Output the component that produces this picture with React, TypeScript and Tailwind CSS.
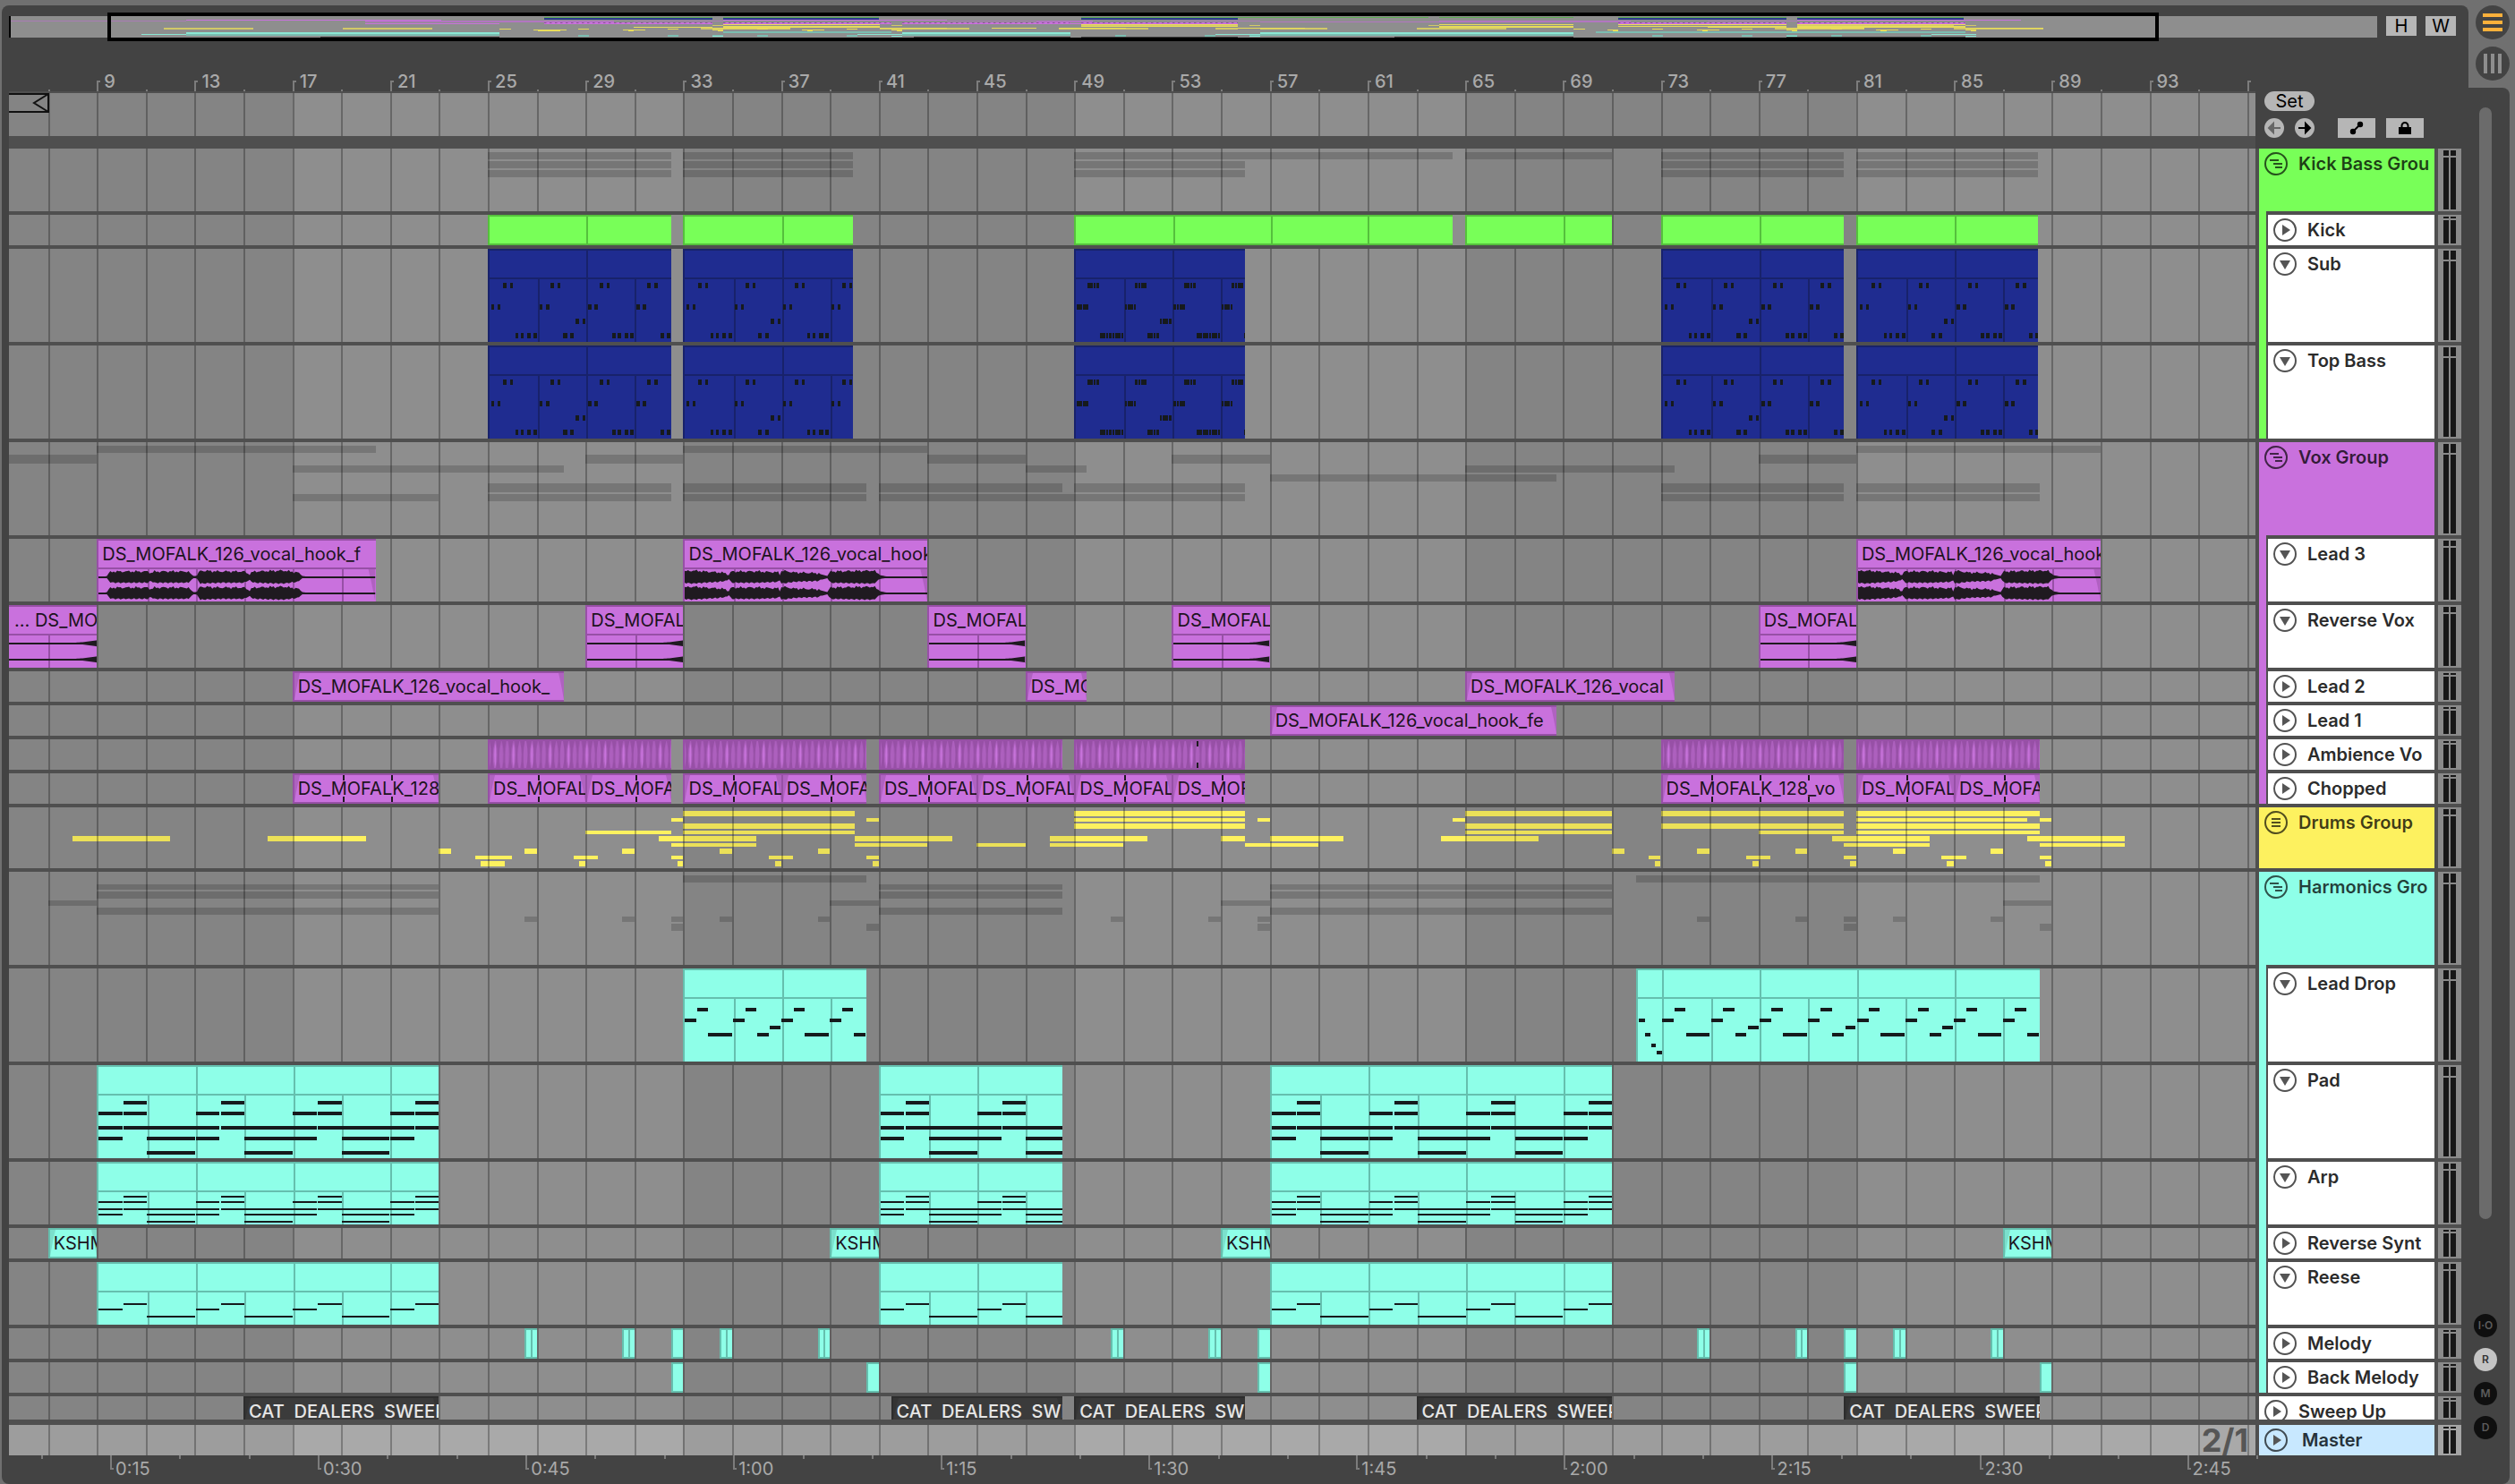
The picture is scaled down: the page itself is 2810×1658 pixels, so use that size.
import type { ReactNode } from "react";
import clsx from "clsx";

const VIEW_START = 5.4;
const VIEW_BARS = 91.94;
const SHADED = [[VIEW_START, 17], [33, 49], [65, 81]];

type Range = number[];
type Kind = "group" | "midi" | "audio" | "plain" | "ambience" | "chopped" | "melody" | "sweep";

interface Palette {
  fill: string;
  line: string;
  fade: string;
  hex: string;
}

interface Track {
  name: string;
  kind: Kind;
  height: string;
  palette: Palette;
  clips?: Range[];
  labels?: string[];
  pattern?: string;
  lanes?: Lane[];
  open?: boolean;
  flat?: boolean;
}

interface Lane {
  y: number;
  h: number;
  ranges: Range[];
}

const GREEN: Palette = { fill: "bg-[#78ff58]", line: "border-[#55c03d]", fade: "#55c03d", hex: "#78ff58" };
const NAVY: Palette = { fill: "bg-[#1f2c90]", line: "border-[#18226b]", fade: "#18226b", hex: "#1f2c90" };
const PINK: Palette = { fill: "bg-[#c971dd]", line: "border-[#9750a6]", fade: "#af62c0", hex: "#c971dd" };
const YELLOW: Palette = { fill: "bg-[#fdf15f]", line: "border-[#c0b648]", fade: "#c0b648", hex: "#fdf15f" };
const CYAN: Palette = { fill: "bg-[#8effe8]", line: "border-[#65bfae]", fade: "#7be0cc", hex: "#8effe8" };
const DARK: Palette = { fill: "bg-[#3b3b3b]", line: "border-[#2d2d2d]", fade: "#343434", hex: "#3b3b3b" };

const kick = [[25, 32.5], [33, 39.95], [49, 64.5], [65, 71], [73, 80.5], [81, 88.45]];
const bass = [[25, 32.5], [33, 39.95], [49, 56], [73, 80.5], [81, 88.45]];
const lead3 = [[9, 20.4], [33, 43], [81, 91]];
const reverseVox = [[VIEW_START, 9], [29, 33], [43, 47], [53, 57], [77, 81]];
const lead2 = [[17, 28.1], [47, 49.5], [65, 73.55]];
const lead1 = [[57, 68.75]];
const ambience = [[25, 32.5], [33, 40.5], [41, 48.5], [49, 56], [73, 80.5], [81, 88.5]];
const chopped = [
  [17, 23], [25, 29], [29, 32.5], [33, 37], [37, 40.5], [41, 45], [45, 49],
  [49, 53], [53, 56], [73, 80.5], [81, 85], [85, 88.5],
];
const leadDrop = [[33, 40.5], [72, 88.5]];
const pad = [[9, 23], [41, 48.5], [57, 71]];
const reverseSynth = [[7, 9], [39, 41], [55, 57], [87, 89]];
const melody = [
  [26.5, 27], [30.5, 31], [32.5, 33], [34.5, 35], [38.5, 39], [50.5, 51], [54.5, 55],
  [56.5, 57], [74.5, 75], [78.5, 79], [80.5, 81], [82.5, 83], [86.5, 87],
];
const backMelody = [[32.5, 33], [40.5, 41], [56.5, 57], [80.5, 81], [88.5, 89]];
const sweep = [[15, 23], [41.5, 48.5], [49, 56], [63, 71], [80.5, 88.5]];

const drums: Lane[] = [
  { y: 4, h: 6, ranges: [[33, 40], [49, 56], [65, 71], [73, 80.5], [81, 88.5]] },
  { y: 12, h: 4, ranges: [[32.5, 33], [40.5, 41], [49, 56], [56.5, 57], [64.5, 65], [81, 88], [88.5, 89]] },
  { y: 18, h: 6, ranges: [[33, 40], [49, 56], [65, 71], [73, 80.5], [81, 88.5]] },
  { y: 26, h: 4, ranges: [[29, 32.5], [33, 40], [65, 71], [77, 80.5], [81, 88.5]] },
  {
    y: 32, h: 6,
    ranges: [[8, 12], [16, 20], [32, 36], [40, 44], [48, 52], [55, 56], [57, 60], [64, 68], [80, 84], [88, 92]],
  },
  { y: 40, h: 4, ranges: [[32.5, 36], [40, 43], [45, 47], [48, 51], [56, 59], [80.5, 84], [88.5, 92]] },
  {
    y: 46, h: 6,
    ranges: [[23, 23.5], [26.5, 27], [30.5, 31], [34.5, 35], [38.5, 39], [71, 71.5], [74.5, 75], [78.5, 79], [82.5, 83], [86.5, 87]],
  },
  {
    y: 54, h: 4,
    ranges: [[24.5, 26], [28.5, 29.5], [32.5, 33], [36.5, 37.5], [40.5, 41], [72.5, 73], [76.5, 77.5], [80.5, 81], [84.5, 85.5], [88.5, 89]],
  },
  {
    y: 60, h: 6,
    ranges: [[24.7, 25.7], [28.75, 29], [32.75, 33], [36.75, 37], [40.75, 41], [72.75, 73], [76.75, 77], [80.75, 81], [84.7, 85], [88.75, 89]],
  },
];

const HOOK = "DS_MOFALK_126_vocal_hook";
const CHOP = "DS_MOFALK";

const tracks: Track[] = [
  {
    name: "Kick Bass Grou", kind: "group", height: "h-[70px]", palette: GREEN,
    lanes: [
      { y: 4, h: 8, ranges: kick },
      { y: 14, h: 8, ranges: bass },
      { y: 24, h: 8, ranges: bass },
    ],
  },
  { name: "Kick", kind: "plain", height: "h-[34px]", palette: GREEN, clips: kick },
  { name: "Sub", kind: "midi", height: "h-[104px]", palette: NAVY, clips: bass, pattern: "bass", open: true },
  { name: "Top Bass", kind: "midi", height: "h-[104px]", palette: NAVY, clips: bass, pattern: "bass", open: true },
  {
    name: "Vox Group", kind: "group", height: "h-[104px]", palette: PINK,
    lanes: [
      { y: 4, h: 8, ranges: lead3 },
      { y: 14, h: 10, ranges: reverseVox },
      { y: 26, h: 8, ranges: lead2 },
      { y: 36, h: 8, ranges: lead1 },
      { y: 46, h: 10, ranges: ambience },
      { y: 58, h: 8, ranges: [[17, 23], [25, 32.5], [33, 40.5], [41, 56], [73, 80.5], [81, 88.5]] },
    ],
  },
  { name: "Lead 3", kind: "audio", height: "h-[70px]", palette: PINK, clips: lead3, labels: [`${HOOK}_f`, HOOK, HOOK], open: true },
  { name: "Reverse Vox", kind: "audio", height: "h-[70px]", palette: PINK, clips: reverseVox, labels: ["... DS_MOF", CHOP, CHOP, CHOP, CHOP], open: true },
  { name: "Lead 2", kind: "plain", height: "h-[34px]", palette: PINK, clips: lead2, labels: [`${HOOK}_`, "DS_MO", "DS_MOFALK_126_vocal"] },
  { name: "Lead 1", kind: "plain", height: "h-[34px]", palette: PINK, clips: lead1, labels: [`${HOOK}_fe`] },
  { name: "Ambience Vo", kind: "ambience", height: "h-[34px]", palette: PINK, clips: ambience },
  {
    name: "Chopped", kind: "chopped", height: "h-[34px]", palette: PINK, clips: chopped,
    labels: ["DS_MOFALK_128", CHOP, CHOP, CHOP, CHOP, CHOP, CHOP, CHOP, CHOP, "DS_MOFALK_128_vo", CHOP, CHOP],
  },
  { name: "Drums Group", kind: "group", height: "h-[68px]", palette: YELLOW, lanes: drums, flat: true },
  {
    name: "Harmonics Gro", kind: "group", height: "h-[104px]", palette: CYAN,
    lanes: [
      { y: 4, h: 8, ranges: leadDrop },
      { y: 14, h: 6, ranges: pad },
      { y: 22, h: 8, ranges: pad },
      { y: 32, h: 6, ranges: reverseSynth },
      { y: 40, h: 8, ranges: pad },
      { y: 50, h: 6, ranges: melody },
      { y: 58, h: 8, ranges: backMelody },
    ],
  },
  { name: "Lead Drop", kind: "midi", height: "h-[104px]", palette: CYAN, clips: leadDrop, pattern: "lead", open: true },
  { name: "Pad", kind: "midi", height: "h-[104px]", palette: CYAN, clips: pad, pattern: "pad", open: true },
  { name: "Arp", kind: "midi", height: "h-[70px]", palette: CYAN, clips: pad, pattern: "arp", open: true },
  { name: "Reverse Synt", kind: "plain", height: "h-[34px]", palette: CYAN, clips: reverseSynth, labels: ["KSHM", "KSHM", "KSHM", "KSHM"] },
  { name: "Reese", kind: "midi", height: "h-[70px]", palette: CYAN, clips: pad, pattern: "reese", open: true },
  { name: "Melody", kind: "melody", height: "h-[34px]", palette: CYAN, clips: melody },
  { name: "Back Melody", kind: "plain", height: "h-[34px]", palette: CYAN, clips: backMelody },
  {
    name: "Sweep Up", kind: "sweep", height: "h-[26px]", palette: DARK, clips: sweep,
    labels: ["CAT  DEALERS  SWEEP", "CAT  DEALERS  SWE", "CAT  DEALERS  SWE", "CAT  DEALERS  SWEEP", "CAT  DEALERS  SWEEP"],
  },
];

// [start, end, y, height] with the start counted in bars inside a four bar loop
const patterns: Record<string, number[][]> = {
  bass: [
    [0.55, 0.7, 4, 6], [0.85, 0.97, 4, 6], [2.52, 2.66, 4, 6], [2.8, 2.94, 4, 6],
    [0.06, 0.2, 28, 6], [0.33, 0.46, 28, 6], [2.08, 2.2, 28, 6], [2.32, 2.46, 28, 6],
    [3.56, 3.7, 44, 6], [3.84, 3.96, 44, 6],
    [1.06, 1.2, 60, 6], [1.3, 1.42, 60, 6], [1.57, 1.72, 60, 6], [1.8, 1.95, 60, 6],
    [3.05, 3.2, 60, 6], [3.33, 3.48, 60, 6],
  ],
  lead: [
    [0, 0.48, 22, 4], [0.5, 0.95, 10, 4], [0.97, 1.95, 38, 4],
    [2, 2.48, 22, 4], [2.5, 2.97, 10, 4], [3, 3.47, 38, 4], [3.52, 3.95, 30, 4],
  ],
  pad: [
    [1.03, 2, 6, 4], [0, 0.98, 18, 4], [1.03, 2, 18, 4],
    [0, 0.98, 34, 4], [1.03, 2, 34, 4], [2, 4, 34, 4],
    [0, 0.98, 46, 4], [2, 3.98, 46, 4], [2, 3.98, 62, 4],
  ],
  arp: [
    [1.03, 2, 4, 2], [0, 0.98, 10, 2], [1.03, 2, 10, 2],
    [0, 0.98, 18, 2], [1.03, 2, 18, 2], [2, 4, 18, 2],
    [0, 0.98, 24, 2], [2, 3.98, 24, 2], [2, 3.98, 32, 2],
  ],
  reese: [[1.03, 2, 12, 2], [0, 0.98, 18, 2], [2, 3.98, 26, 2]],
};

const leadPickup = [[0.04, 0.28, 22, 4], [0.3, 0.5, 38, 4], [0.55, 0.74, 50, 4], [0.78, 0.98, 58, 4]];

// dense sixteenths of the break: [start, end, y]
const denseBass = [
  [0.48, 0.98, 4], [2.45, 2.95, 4], [0.04, 0.48, 28], [2.02, 2.46, 28],
  [3.47, 3.97, 44], [1, 2, 60], [2.96, 3.46, 60],
];

const percent = (bars: number) => `${(bars / VIEW_BARS) * 100}%`;
const place = (from: number, to: number) => ({
  left: percent(from - VIEW_START),
  width: percent(to - from),
});

const barsBetween = (from: number, to: number, step: number) => {
  const list: number[] = [];
  for (let bar = 1; bar < to; bar += step) {
    if (bar > from) list.push(bar);
  }
  return list;
};

const GRID = barsBetween(VIEW_START, 97.2, 2);

const Grid = () => (
  <div className="pointer-events-none absolute inset-0 overflow-hidden">
    {SHADED.map(([from, to]) => (
      <div key={from} className="absolute inset-y-0 bg-black/7" style={place(from, to)} />
    ))}
    {GRID.map((bar) => (
      <div
        key={bar}
        className="absolute inset-y-0 w-0.5 bg-black/27"
        style={{ left: percent(bar - VIEW_START) }}
      />
    ))}
  </div>
);

const ClipLines = ({ range: [from, to], step, className }: { range: Range; step: number; className: string }) => (
  <>
    {barsBetween(from, to, step).map((bar) => (
      <div
        key={bar}
        className={clsx("absolute inset-y-0 border-l-2", className)}
        style={{ left: `${((bar - from) / (to - from)) * 100}%` }}
      />
    ))}
  </>
);

const Fades = ({ color }: { color: string }) => (
  <>
    <svg className="absolute inset-y-0 left-0 h-full w-1.5" viewBox="0 0 6 30" preserveAspectRatio="none">
      <path d="M0 0H6Q3 12 0 30Z" fill={color} />
    </svg>
    <svg className="absolute inset-y-0 right-0 h-full w-1.5" viewBox="0 0 6 30" preserveAspectRatio="none">
      <path d="M6 0H0Q3 12 6 30Z" fill={color} />
    </svg>
  </>
);

const notesFor = (pattern: string, from: number, to: number) => {
  const notes: number[][] = [];
  if (pattern === "bass" && from === 49) {
    for (let loop = from; loop < to; loop += 4) {
      denseBass.forEach(([a, b, y]) => {
        for (let t = a; t < b - 0.02; t += 0.125) notes.push([loop + t, loop + t + 0.1, y, 6]);
      });
    }
    return notes;
  }
  let start = from;
  if (pattern === "lead" && from === 72) {
    leadPickup.forEach(([a, b, y, h]) => notes.push([from + a, from + b, y, h]));
    start = 73;
  }
  for (let loop = start; loop < to; loop += 4) {
    patterns[pattern].forEach(([a, b, y, h]) => notes.push([loop + a, loop + b, y, h]));
  }
  return notes;
};

const MidiNotes = ({ range: [from, to], pattern, tall }: { range: Range; pattern: string; tall: boolean }) => (
  <svg
    className="absolute inset-0 h-full w-full"
    viewBox={`0 0 ${(to - from) * 100} ${tall ? 70 : 36}`}
    preserveAspectRatio="none"
    shapeRendering="crispEdges"
  >
    {notesFor(pattern, from, to).map(([a, b, y, h], i) => (
      <rect key={i} x={(a - from) * 100} y={y} width={(b - a) * 100} height={h} fill="#161a1c" />
    ))}
  </svg>
);

const hookIntro = [
  [0, 0], [0.3, 0], [0.45, 6], [0.6, 7], [2.05, 7], [2.15, 5], [2.3, 7], [3.7, 7], [3.9, 2], [4.05, 2],
  [4.2, 8], [5, 7], [6, 7], [6.2, 4], [6.4, 7], [7.6, 8], [8.2, 6], [8.4, 2], [8.9, 0], [20, 0],
];
const hookDrop = [
  [0, 7], [0.3, 8], [0.8, 7], [1.4, 6], [1.7, 5], [1.82, 3], [1.92, 7], [3, 7], [3.85, 6], [3.92, 4], [4, 8],
  [4.5, 6], [5.5, 5], [5.75, 3], [5.9, 2], [6, 7], [7.8, 8], [8.05, 3], [8.4, 1], [8.8, 0], [20, 0],
];
const reverseTail = [[0, 0], [1.6, 0], [2.8, 1], [3.4, 2], [4, 4]];

const envelopeAt = (points: number[][], t: number) => {
  const i = Math.max(1, points.findIndex(([x]) => x >= t));
  const [x0, y0] = points[i - 1];
  const [x1, y1] = points[i];
  return y0 + ((t - x0) / (x1 - x0)) * (y1 - y0);
};

const wavePath = (points: number[][], offset: number, bars: number, center: number) => {
  const top: string[] = [];
  const bottom: string[] = [];
  for (let t = 0; t <= bars; t += 0.07) {
    const level = envelopeAt(points, t + offset);
    const noise = level > 4 ? Math.sin(t * 17) * 0.8 + Math.sin(t * 41 + 1) * 0.8 : 0;
    const up = Math.max(1, level + noise - 0.5);
    const down = Math.max(1, level + Math.sin(t * 29) * (level > 4 ? 0.7 : 0) - 1);
    top.push(`${(t * 100).toFixed(0)} ${(center - up).toFixed(1)}`);
    bottom.unshift(`${(t * 100).toFixed(0)} ${(center + down).toFixed(1)}`);
  }
  const end = (bars * 100).toFixed(0);
  const last = Math.max(1, envelopeAt(points, Math.min(bars + offset, points[points.length - 1][0])));
  return `M${top.join("L")}L${end} ${center - last}L${end} ${center + last}L${bottom.join("L")}Z`;
};

const Waveform = ({ range: [from, to], reverse }: { range: Range; reverse: boolean }) => {
  const bars = to - from;
  const points = reverse ? reverseTail : from === 9 ? hookIntro : hookDrop;
  const offset = reverse ? 4 - bars : 0;
  const end = bars * 100;
  return (
    <svg
      className="absolute inset-0 h-full w-full"
      viewBox={`0 0 ${end} 36`}
      preserveAspectRatio="none"
      fill="#1f1a20"
    >
      {!reverse && (
        <path d={`M${end - 28} 0H${end}V36Q${end - 12} 18 ${end - 28} 0Z`} fill="#9750a6" fillOpacity="0.5" />
      )}
      <path d={wavePath(points, offset, bars, 9)} />
      <path d={wavePath(points, offset, bars, 27)} />
    </svg>
  );
};

const AmbienceFades = ({ id }: { id: string }) => (
  <svg className="absolute inset-0 h-full w-full">
    <defs>
      <pattern id={id} width="20.5" height="30" patternUnits="userSpaceOnUse">
        <rect width="20.5" height="30" fill="#ad60be" />
        <path d="M0 0Q3 15 0 30H5Q2 15 6 0ZM7 0Q10 15 7 30H12Q9 15 13 0ZM13.500 0Q17 15 14 30H18Q16 15 19 0Z" fill="#9750a6" />
        <path d="M6.500 2Q4 15 6.500 30Q8 15 6.500 2Z" fill="#cb75df" />
      </pattern>
    </defs>
    <rect width="100%" height="100%" fill={`url(#${id})`} />
  </svg>
);

const WarpTicks = ({ range: [from, to], bars }: { range: Range; bars: number[] }) => (
  <>
    {bars.filter((bar) => bar > from && bar < to).map((bar) => (
      <div
        key={bar}
        className="absolute inset-y-0 flex w-0.5 flex-col justify-between"
        style={{ left: `${((bar - from) / (to - from)) * 100}%` }}
      >
        <span className="h-1.5 bg-[#1f1a20]" />
        <span className="h-1.5 bg-[#1f1a20]" />
      </div>
    ))}
  </>
);

const Clip = ({ track, range, label }: { track: Track; range: Range; label?: string }) => {
  const { palette, kind } = track;
  const cut = range[0] === VIEW_START;
  const base = clsx("absolute inset-y-0 overflow-hidden border-t-2", palette.fill, palette.line);

  if (kind === "midi" || kind === "audio") {
    return (
      <div className={clsx(base, "flex flex-col", !cut && "border-l-2")} style={place(range[0], range[1])}>
        <div className={clsx("relative h-8 shrink-0 border-b-2", palette.line)}>
          {kind === "midi" && <ClipLines range={range} step={4} className={palette.line} />}
          {label && (
            <span className={clsx("block text-xl leading-[30px] whitespace-nowrap text-[#1d1320]", cut ? "pl-1.5" : "pl-1")}>
              {label}
            </span>
          )}
        </div>
        <div className="relative flex-1">
          <ClipLines range={range} step={2} className={palette.line} />
          {kind === "midi" ? (
            <MidiNotes range={range} pattern={track.pattern!} tall={track.height === "h-[104px]"} />
          ) : (
            <Waveform range={range} reverse={track.name === "Reverse Vox"} />
          )}
        </div>
      </div>
    );
  }

  return (
    <div className={clsx(base, "border-l-2", kind !== "sweep" && "border-b-2")} style={place(range[0], range[1])}>
      {label && <Fades color={palette.fade} />}
      {kind === "ambience" && <AmbienceFades id={`fades-${range[0]}`} />}
      {kind === "ambience" && <WarpTicks range={range} bars={[54]} />}
      {kind === "chopped" && <WarpTicks range={range} bars={barsBetween(range[0], range[1], 2)} />}
      {track.name === "Kick" && <ClipLines range={range} step={4} className={palette.line} />}
      {kind === "melody" && ![32.5, 56.5, 80.5].includes(range[0]) && (
        <div className={clsx("mx-auto h-full w-0 border-l-2", palette.line)} />
      )}
      {label && (
        <span
          className={clsx(
            "relative block pl-1 text-xl leading-[30px] whitespace-pre",
            kind === "sweep" ? "font-medium text-[#e6e6e6]" : "text-[#1d1320]",
          )}
        >
          {label}
        </span>
      )}
    </div>
  );
};

const TrackLane = ({ track }: { track: Track }) => (
  <div className="relative flex-1 overflow-hidden bg-[#8e8e8e]">
    {track.lanes?.map((lane) =>
      lane.ranges.map(([from, to]) => (
        <div
          key={`${lane.y}-${from}`}
          className={clsx("absolute", track.flat ? "bg-[#fdf15f]" : "bg-black/17")}
          style={{ ...place(from, to), top: lane.y, height: lane.h }}
        />
      )),
    )}
    <Grid />
    {track.clips?.map((range, i) => (
      <Clip key={range[0]} track={track} range={range} label={track.labels?.[i]} />
    ))}
  </div>
);

const TrackIcon = ({ shape }: { shape: "group" | "flat" | "open" | "closed" }) => (
  <svg className="size-[26px]" viewBox="0 0 26 26" fill="none" stroke="#000" strokeOpacity="0.68" strokeWidth="2">
    <circle cx="13" cy="13" r="12" />
    {shape === "group" && <path d="M6 9H16M10 13H20M12 17H20" />}
    {shape === "flat" && <path d="M8 9H18M8 13H18M8 17H18" />}
    {shape === "open" && <path d="M7 9H19L13 19Z" fill="#555" stroke="none" />}
    {shape === "closed" && <path d="M10 7L19 13L10 19Z" fill="#555" stroke="none" />}
  </svg>
);

const Meter = ({ peak, className = "bg-[#8a8a8a]" }: { peak: string; className?: string }) => (
  <div className={clsx("flex w-[26px] shrink-0 gap-0.5 py-0.5 pl-1.5", className)}>
    {[0, 1].map((channel) => (
      <div key={channel} className="flex w-1.5 flex-col gap-0.5">
        <span className={clsx("bg-[#171717]", peak)} />
        <span className="flex-1 bg-[#171717]" />
      </div>
    ))}
  </div>
);

const peakFor: Record<string, string> = {
  "h-[26px]": "h-0.5",
  "h-[34px]": "h-0.5",
  "h-[68px]": "h-1.5",
  "h-[70px]": "h-1.5",
  "h-[104px]": "h-2.5",
};

const TrackHeader = ({ track, parent }: { track: Track; parent?: Palette }) => {
  if (track.kind === "group") {
    return (
      <div className={clsx("flex w-[196px] shrink-0 items-start gap-3 overflow-hidden pt-1 pl-1.5", track.palette.fill)}>
        <button aria-label={`Fold ${track.name}`}>
          <TrackIcon shape={track.flat ? "flat" : "group"} />
        </button>
        <span className="text-xl leading-[26px] font-semibold whitespace-nowrap text-black/75">{track.name}</span>
      </div>
    );
  }
  return (
    <div className="flex w-[196px] shrink-0">
      {parent && <div className={clsx("-mt-1 mr-0.5 w-2 shrink-0", parent.fill)} />}
      <div className="flex flex-1 items-start gap-3 overflow-hidden bg-white pt-1 pl-1.5">
        <button aria-label={`Unfold ${track.name}`}>
          <TrackIcon shape={track.open ? "open" : "closed"} />
        </button>
        <span className="text-xl leading-[26px] font-semibold whitespace-nowrap text-[#2b2b2b]">{track.name}</span>
      </div>
    </div>
  );
};

const overviewRows: { y: number; h: number; color: string; ranges: Range[]; opacity?: number }[] = [
  { y: 1, h: 1, color: "#5cab52", ranges: kick },
  { y: 2, h: 2, color: "#2b3a8c", ranges: bass },
  { y: 4, h: 1, color: "#c971dd", ranges: lead3 },
  { y: 5, h: 1, color: "#a97bb5", ranges: [[1.08, 9], ...reverseVox.slice(1)] },
  { y: 5, h: 2, color: "#b276c1", ranges: lead2 },
  { y: 6, h: 1, color: "#b276c1", ranges: lead1 },
  { y: 7, h: 1, color: "#c971dd", ranges: ambience },
  { y: 8, h: 1, color: "#c971dd", ranges: chopped },
  ...drums.map((lane, i) => ({
    y: i < 5 ? 9 + i : 8 + i,
    h: i === 4 ? 2 : 1,
    color: "#e8dc5a",
    ranges: lane.ranges,
    opacity: i === 1 || i === 4 ? 0.75 : 1,
  })),
  { y: 17, h: 2, color: "#7bbcb0", ranges: leadDrop },
  { y: 18, h: 2, color: "#8ae6d3", ranges: pad },
  { y: 20, h: 1, color: "#8ae6d3", ranges: reverseSynth },
  { y: 20, h: 2, color: "#7bbcb0", ranges: pad },
  { y: 21, h: 2, color: "#7bbcb0", ranges: melody },
  { y: 22, h: 1, color: "#8ae6d3", ranges: backMelody },
  { y: 23, h: 1, color: "#3b3b3b", ranges: sweep },
];

const Overview = () => (
  <div className="relative h-6 flex-1 bg-[#8e8e8e]">
    <svg
      className="absolute inset-0 h-full w-full"
      viewBox="108 0 10584 24"
      preserveAspectRatio="none"
      shapeRendering="crispEdges"
    >
      {overviewRows.map((row, i) =>
        row.ranges.map(([from, to]) => (
          <rect
            key={`${i}-${from}`}
            x={from * 100}
            y={row.y}
            width={(to - from) * 100}
            height={row.h}
            fill={row.color}
            fillOpacity={row.opacity ?? 1}
          />
        )),
      )}
      {ambience.map(([from, to]) => (
        <path
          key={from}
          d={`M${from * 100} 7.500H${to * 100}`}
          stroke="#6d3d78"
          strokeWidth="1"
          strokeDasharray="10 14"
        />
      ))}
    </svg>
    <div className="absolute inset-y-0 left-0 w-0.5 bg-black" />
    <div className="absolute -inset-y-1 left-[4.16%] w-[86.62%] border-4 border-black" />
  </div>
);

const SmallButton = ({ label, className, children }: { label?: string; className: string; children: ReactNode }) => (
  <button
    aria-label={label}
    className={clsx("flex h-[22px] items-center justify-center bg-[#b6b6b6] text-xl leading-[22px] text-black", className)}
  >
    {children}
  </button>
);

const BarRuler = () => (
  <div className="relative mt-[38px] h-6 border-b-2 border-[#4f4f4f]">
    {GRID.map((bar) => (
      <div key={bar} className="absolute inset-y-0 flex items-end" style={{ left: percent(bar - VIEW_START) }}>
        {bar % 4 === 1 ? (
          <span className="h-3 w-1 border-t-2 border-l-2 border-[#7c7c7c]" />
        ) : (
          <span className="h-0.5 w-0.5 bg-[#7c7c7c]" />
        )}
        {bar % 4 === 1 && bar < 97 && (
          <span className="self-start pl-1 text-xl leading-[22px] font-medium text-[#a9a9a9]">{bar}</span>
        )}
      </div>
    ))}
  </div>
);

const timeLabels = ["0:15", "0:30", "0:45", "1:00", "1:15", "1:30", "1:45", "2:00", "2:15", "2:30", "2:45"];

const TimeRuler = () => (
  <div className="relative mr-[238px] h-8">
    {Array.from({ length: 33 }, (_, i) => (
      <div
        key={i}
        className="absolute top-0 flex items-start"
        style={{ left: percent(9.54 + ((i - 1) * 8.5) / 3 - VIEW_START) }}
      >
        {i % 3 === 1 ? (
          <>
            <span className="h-4 w-1 border-b-2 border-l-2 border-[#7c7c7c]" />
            <span className="pt-1 pl-0.5 text-xl leading-[22px] text-[#a9a9a9]">{timeLabels[(i - 1) / 3]}</span>
          </>
        ) : (
          <span className="h-1 w-0.5 bg-[#7c7c7c]" />
        )}
      </div>
    ))}
  </div>
);

const SideButton = ({ label, on }: { label: string; on?: boolean }) => (
  <button
    className={clsx(
      "flex size-[26px] items-center justify-center rounded-full text-xs font-semibold",
      on ? "bg-[#c4c4c4] text-[#333]" : "bg-[#0f0f0f] text-[#5c5c5c]",
    )}
  >
    {label}
  </button>
);

const App = () => {
  let parent: Palette | undefined;

  return (
    <div className="flex min-h-screen bg-[#707070] pt-1.5 pr-1.5 pl-0.5 font-['Inter',sans-serif]">
      <main className="flex-1 rounded-t-lg rounded-bl-lg bg-[#434343] pl-2">
        <div className="flex gap-2.5 pt-3 pr-3.5">
          <Overview />
          <SmallButton className="w-[34px]">H</SmallButton>
          <SmallButton className="w-[34px]">W</SmallButton>
        </div>

        <div className="flex">
          <div className="flex-1">
            <BarRuler />
            <div className="relative h-12 bg-[#8e8e8e]">
              <Grid />
              <svg className="relative block h-[22px] w-[45px]" viewBox="0 0 45 22" fill="none" stroke="#111" strokeWidth="2">
                <path d="M0 1H44V21H0" />
                <path d="M44 1L28 11L44 21" />
              </svg>
            </div>
            <div className="h-3.5 bg-[#4f4f4f]" />
          </div>
          <div className="flex w-[238px] shrink-0 flex-col items-start gap-2 pt-[60px] pl-2.5">
            <SmallButton className="w-14 rounded-full">Set</SmallButton>
            <div className="flex">
              <SmallButton label="Previous locator" className="w-[22px] rounded-full">
                <svg className="size-[22px]" viewBox="0 0 22 22" fill="#666" stroke="#666" strokeWidth="2">
                  <path d="M18 11H10" />
                  <path d="M10 6V16L5 11Z" />
                </svg>
              </SmallButton>
              <SmallButton label="Next locator" className="ml-3 w-[22px] rounded-full">
                <svg className="size-[22px]" viewBox="0 0 22 22" fill="#000" stroke="#000" strokeWidth="2">
                  <path d="M4 11H12" />
                  <path d="M12 6V16L17 11Z" />
                </svg>
              </SmallButton>
              <SmallButton label="Automation mode" className="ml-[26px] w-[42px]">
                <svg className="size-[22px]" viewBox="0 0 22 22" stroke="#000" strokeWidth="2">
                  <path d="M7 15L15 7" />
                  <circle cx="7" cy="15" r="2.200" />
                  <circle cx="15" cy="7" r="2.200" />
                </svg>
              </SmallButton>
              <SmallButton label="Lock envelopes" className="ml-3 w-[42px]">
                <svg className="size-[22px]" viewBox="0 0 22 22">
                  <path d="M7.500 10V8.500a3.500 3.500 0 0 1 7 0V10" fill="none" stroke="#000" strokeWidth="2" />
                  <rect x="4" y="10" width="14" height="8" />
                </svg>
              </SmallButton>
            </div>
          </div>
        </div>

        <div className="mr-2 flex flex-col gap-1 bg-[#4f4f4f]">
          {tracks.map((track) => {
            if (track.kind === "group") parent = track.palette;
            if (track.kind === "sweep") parent = undefined;
            return (
              <div key={track.name} className={clsx("flex gap-1", track.height)}>
                <TrackLane track={track} />
                <TrackHeader track={track} parent={parent} />
                <Meter peak={peakFor[track.height]} />
              </div>
            );
          })}
          <div className="mt-0.5 flex h-[34px] gap-1">
            <div className="relative flex flex-1 items-center justify-end bg-[#a9a9a9]">
              <Grid />
              <span className="relative pr-2 text-[36px] leading-[34px] font-bold text-[#565656]">2/1</span>
            </div>
            <div className="flex w-[196px] shrink-0 items-start gap-4 bg-[#c8e8ff] pt-1 pl-1.5">
              <button aria-label="Unfold Master">
                <TrackIcon shape="closed" />
              </button>
              <span className="text-xl leading-[26px] font-semibold text-[#26323a]">Master</span>
            </div>
            <Meter peak="h-0.5" className="bg-[#a5a5a5]" />
          </div>
        </div>

        <TimeRuler />
      </main>

      <aside className="flex w-[46px] shrink-0 flex-col">
        <div className="flex flex-col items-end gap-2 pb-2">
          <button aria-label="Arrangement view" className="flex size-[38px] flex-col items-center justify-center gap-1 rounded-full bg-[#434343]">
            <span className="h-1 w-[22px] bg-[#fbb03b]" />
            <span className="h-1 w-[22px] bg-[#fbb03b]" />
            <span className="h-1 w-[22px] bg-[#fbb03b]" />
          </button>
          <button aria-label="Session view" className="flex size-[38px] items-center justify-center gap-1 rounded-full bg-[#434343]">
            <span className="h-[22px] w-1 bg-[#8e8e8e]" />
            <span className="h-[22px] w-1 bg-[#8e8e8e]" />
            <span className="h-[22px] w-1 bg-[#8e8e8e]" />
          </button>
        </div>
        <div className="flex flex-1 flex-col rounded-tr-lg rounded-br-lg bg-[#434343] pt-[22px] pb-[50px] pl-1.5">
          <div className="mb-[106px] ml-1.5 w-3.5 flex-1 rounded-full bg-[#6b6b6b]" />
          <div className="flex flex-col gap-3">
            <SideButton label="I·O" />
            <SideButton label="R" on />
            <SideButton label="M" />
            <SideButton label="D" />
          </div>
        </div>
      </aside>
    </div>
  );
};

export default App;
